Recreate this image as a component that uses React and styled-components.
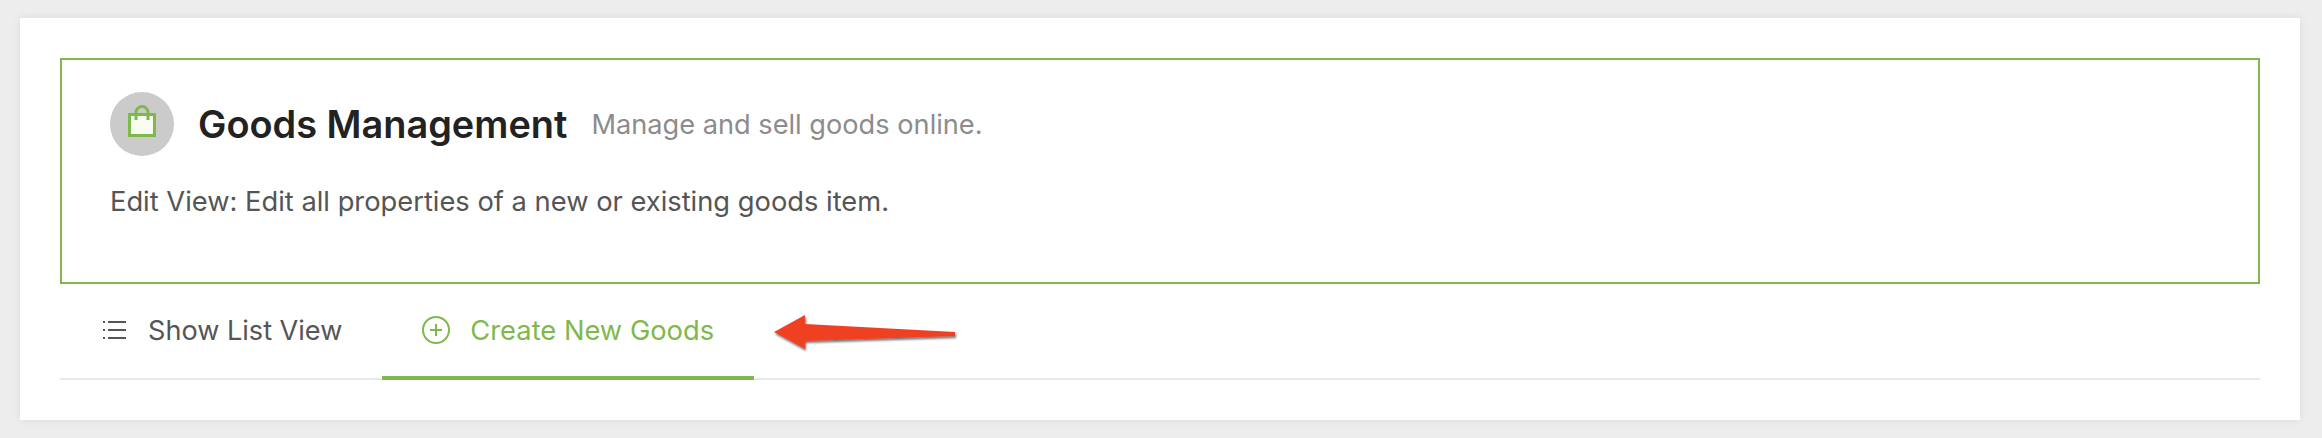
import React from 'react';
import styled, { createGlobalStyle } from 'styled-components';

const GlobalStyle = createGlobalStyle`
  html, body {
    margin: 0;
    padding: 0;
    background: #ededed;
  }
  body {
    font-family: Inter, 'Liberation Sans', sans-serif;
  }
`;

const green = '#7fb84b';

const Page = styled.div`
  width: 2322px;
  height: 438px;
  padding: 18px 22px 18px 20px;
  box-sizing: border-box;
  overflow: hidden;
`;
const Card = styled.section`
  height: 402px;
  box-sizing: border-box;
  padding: 40px 40px 0;
  background: #fff;
  box-shadow: 0 0 8px rgba(0, 0, 0, 0.08);
`;
const Intro = styled.div`
  height: 226px;
  box-sizing: border-box;
  padding: 32px 48px 0;
  border: 2px solid ${green};
`;
const Heading = styled.div`
  display: flex;
  align-items: center;
  height: 64px;
`;
const IconCircle = styled.span`
  display: flex;
  align-items: center;
  justify-content: center;
  width: 64px;
  height: 64px;
  margin-right: 24px;
  border-radius: 50%;
  background: #cbcbcb;
`;
const Bag = styled.svg`
  margin-bottom: 6px;
`;
const Title = styled.h1`
  margin: 0 24px 0 0;
  font-size: 37.9px;
  line-height: 44px;
  font-weight: 600;
  color: #222;
`;
const Tagline = styled.span`
  font-size: 27.2px;
  color: #8c8c8c;
`;
const Description = styled.p`
  margin: 26px 0 0;
  font-size: 27.3px;
  line-height: 40px;
  color: #555;
`;
const Tabs = styled.nav`
  position: relative;
  display: flex;
  height: 96px;
  box-sizing: border-box;
  border-bottom: 2px solid #e8e8e8;
`;
const Tab = styled.a`
  display: flex;
  align-items: center;
  gap: 20px;
  height: 96px;
  box-sizing: border-box;
  padding: 0 40px;
  font-size: ${(p) => (p.$active ? '27.3px' : '27.1px')};
  color: ${(p) => (p.$active ? green : '#555')};
  border-bottom: 4px solid ${(p) => (p.$active ? green : 'transparent')};
`;
const Arrow = styled.svg`
  position: absolute;
  left: 713px;
  top: 31px;
  overflow: visible;
`;

const BagIcon = () => (
  <Bag width="28" height="32" viewBox="0 0 28 32">
    <rect x="1.5" y="9.5" width="25" height="21" fill="#f8fbf0" stroke={green} strokeWidth="3" />
    <path d="M8 15V7.5a6 6 0 0 1 12 0V15" fill="none" stroke={green} strokeWidth="3" />
  </Bag>
);

const ListIcon = () => (
  <svg width="28" height="28" viewBox="0 0 28 28" stroke="#555" strokeWidth="2" fill="none">
    <path d="M8 6h18M8 14h18M8 22h18M3 6h2M3 14h2M3 22h2" />
  </svg>
);

const PlusIcon = () => (
  <svg width="28" height="28" viewBox="0 0 28 28" stroke={green} strokeWidth="2" fill="none">
    <circle cx="14" cy="14" r="13" />
    <path d="M14 8v12M8 14h12" />
  </svg>
);

const App = () => (
  <Page>
    <GlobalStyle />
    <Card>
      <Intro>
        <Heading>
          <IconCircle>
            <BagIcon />
          </IconCircle>
          <Title>Goods Management</Title>
          <Tagline>Manage and sell goods online.</Tagline>
        </Heading>
        <Description>Edit View: Edit all properties of a new or existing goods item.</Description>
      </Intro>
      <Tabs>
        <Tab>
          <ListIcon />
          Show List View
        </Tab>
        <Tab $active>
          <PlusIcon />
          Create New Goods
        </Tab>
        <Arrow width="183" height="35" viewBox="0 0 183 35">
          <defs>
            <filter id="arrowShadow" x="-10%" y="-30%" width="120%" height="170%">
              <feDropShadow dx="1" dy="2" stdDeviation="1.2" floodColor="#000" floodOpacity="0.55" />
            </filter>
          </defs>
          <polygon points="1,17 32,0 32,9 182,17 182,21 32,26 32,34" fill="#ef4123" filter="url(#arrowShadow)" />
        </Arrow>
      </Tabs>
    </Card>
  </Page>
);

export default App;
